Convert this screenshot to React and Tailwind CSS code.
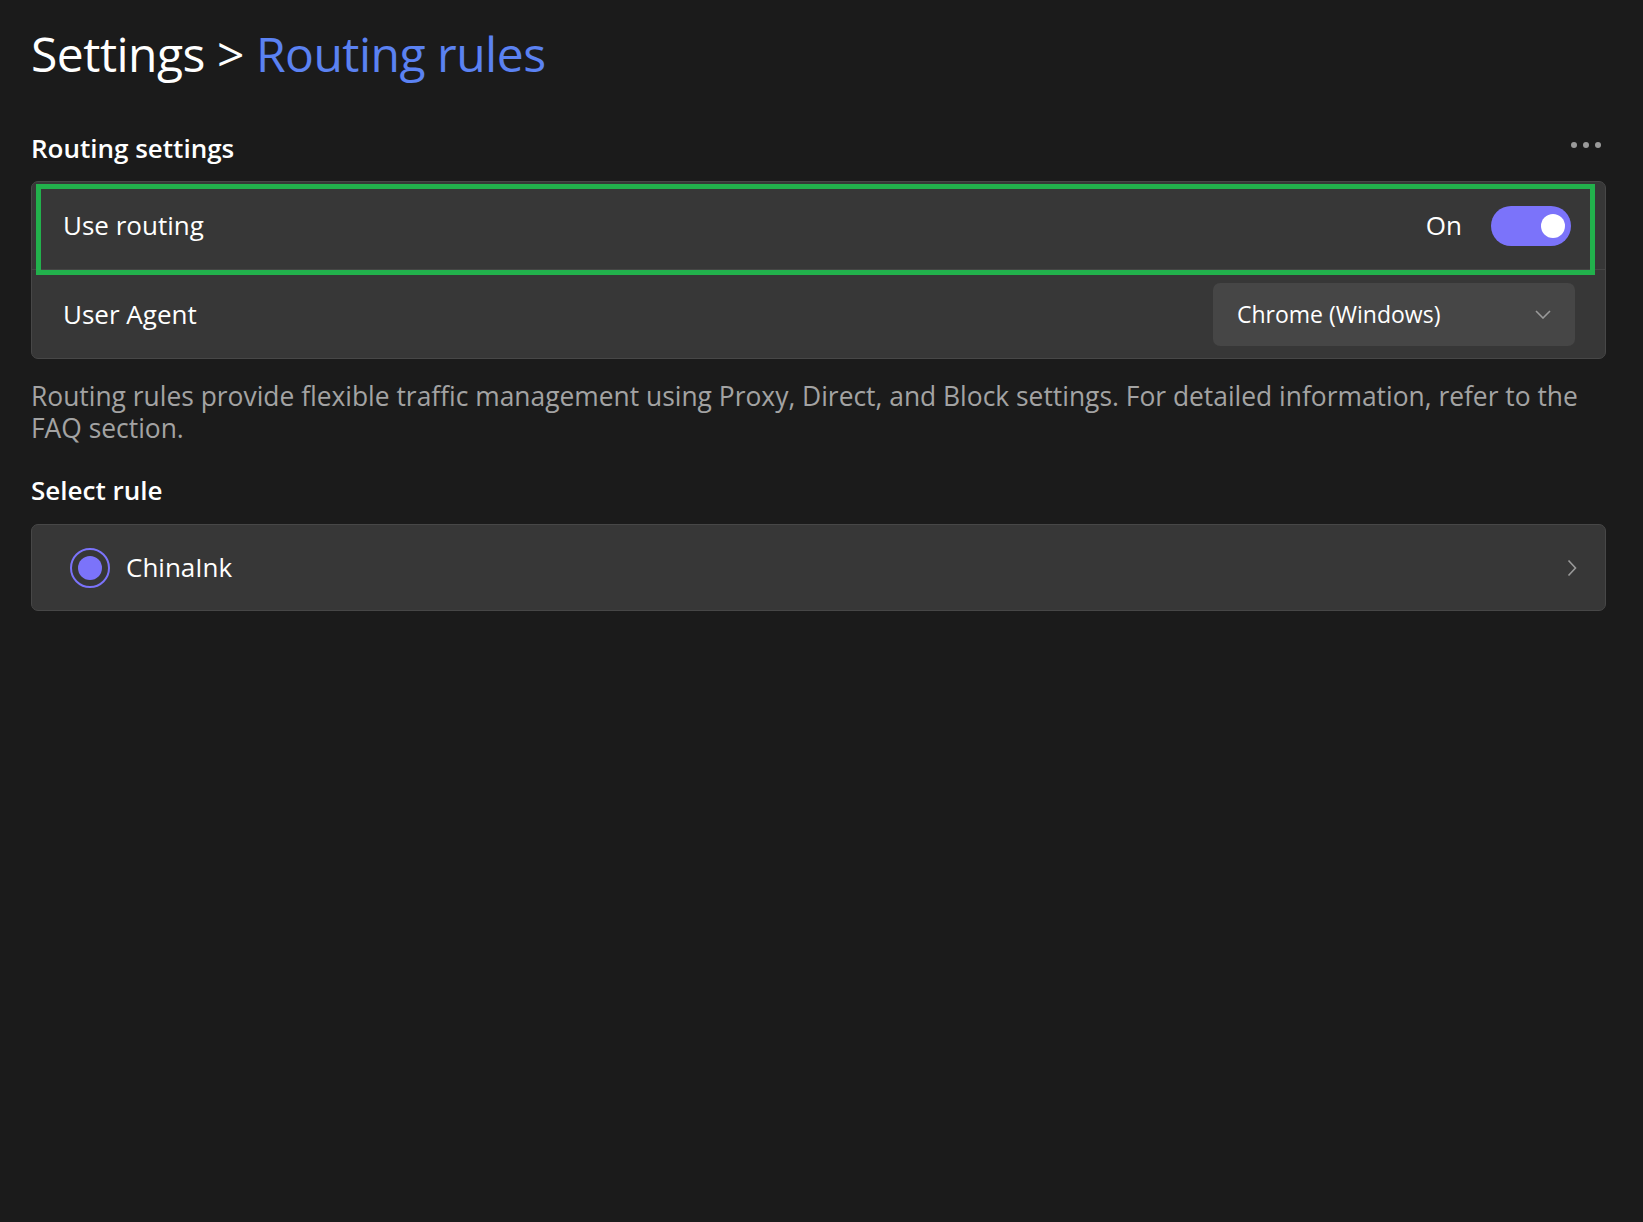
import React from "react";

export default function App() {
  return (
    <div className="min-h-screen bg-[#1b1b1b] pl-[31px] pr-[37px] pt-[24px] text-white" style={{ fontFamily: '"Open Sans", "Noto Sans", sans-serif' }}>
      <h1 className="text-[48px] leading-[60px] font-medium tracking-[-0.5px]">
        <span className="text-white">Settings</span>
        <span className="text-white"> &gt; </span>
        <span className="text-[#5b82f2]">Routing rules</span>
      </h1>

      <div className="mt-[47px] flex items-center justify-between">
        <h2 className="text-[26px] leading-[34px] font-semibold">Routing settings</h2>
        <div className="mr-[5px] mb-[6px] flex items-center gap-[6px]">
          <span className="h-[6px] w-[6px] rounded-full bg-[#9a9a9a]" />
          <span className="h-[6px] w-[6px] rounded-full bg-[#9a9a9a]" />
          <span className="h-[6px] w-[6px] rounded-full bg-[#9a9a9a]" />
        </div>
      </div>

      <div className="relative mt-[16px] rounded-[7px] border border-[#474747] bg-[#373737]">
        <div className="flex h-[88px] items-center justify-between border-b border-[#454545] pl-[31px] pr-[34px]">
          <span className="text-[26px]">Use routing</span>
          <div className="flex items-center gap-[29px]">
            <span className="text-[26px]">On</span>
            <div className="flex h-[40px] w-[80px] items-center justify-end rounded-full bg-[#7b73fa] pr-[6px]">
              <span className="h-[24px] w-[24px] rounded-full bg-white" />
            </div>
          </div>
        </div>
        <div className="flex h-[88px] items-center justify-between pl-[31px] pr-[30px]">
          <span className="text-[26px]">User Agent</span>
          <div className="flex h-[63px] w-[362px] items-center justify-between rounded-[7px] bg-[#464646] pl-[24px] pr-[24px]">
            <span className="text-[23px]">Chrome (Windows)</span>
            <svg width="16" height="9" viewBox="0 0 16 9" fill="none">
              <path d="M1 1 L8 8 L15 1" stroke="#9a9a9a" strokeWidth="1.6" />
            </svg>
          </div>
        </div>
        <div className="pointer-events-none absolute left-[4px] top-[2px] h-[91px] w-[1559px] border-[5px] border-[#22b14c]" />
      </div>

      <p className="mt-[21px] text-[26.4px] leading-[32px] text-[#a3a3a3]">
        Routing rules provide flexible traffic management using Proxy, Direct, and Block settings. For detailed information, refer to the
        <br />
        FAQ section.
      </p>

      <h2 className="mt-[28px] text-[26px] leading-[36px] font-semibold">Select rule</h2>

      <div className="mt-[16px] flex h-[87px] items-center justify-between rounded-[7px] border border-[#474747] bg-[#373737] pl-[38px] pr-[28px]">
        <div className="flex items-center gap-[16px]">
          <div className="flex h-[40px] w-[40px] items-center justify-center rounded-full border-[2px] border-[#7b73fa]">
            <span className="h-[24px] w-[24px] rounded-full bg-[#7b73fa]" />
          </div>
          <span className="text-[26px]">ChinaInk</span>
        </div>
        <svg width="10" height="18" viewBox="0 0 10 18" fill="none">
          <path d="M1.5 1.5 L8.5 9 L1.5 16.5" stroke="#9a9a9a" strokeWidth="1.6" />
        </svg>
      </div>
    </div>
  );
}
